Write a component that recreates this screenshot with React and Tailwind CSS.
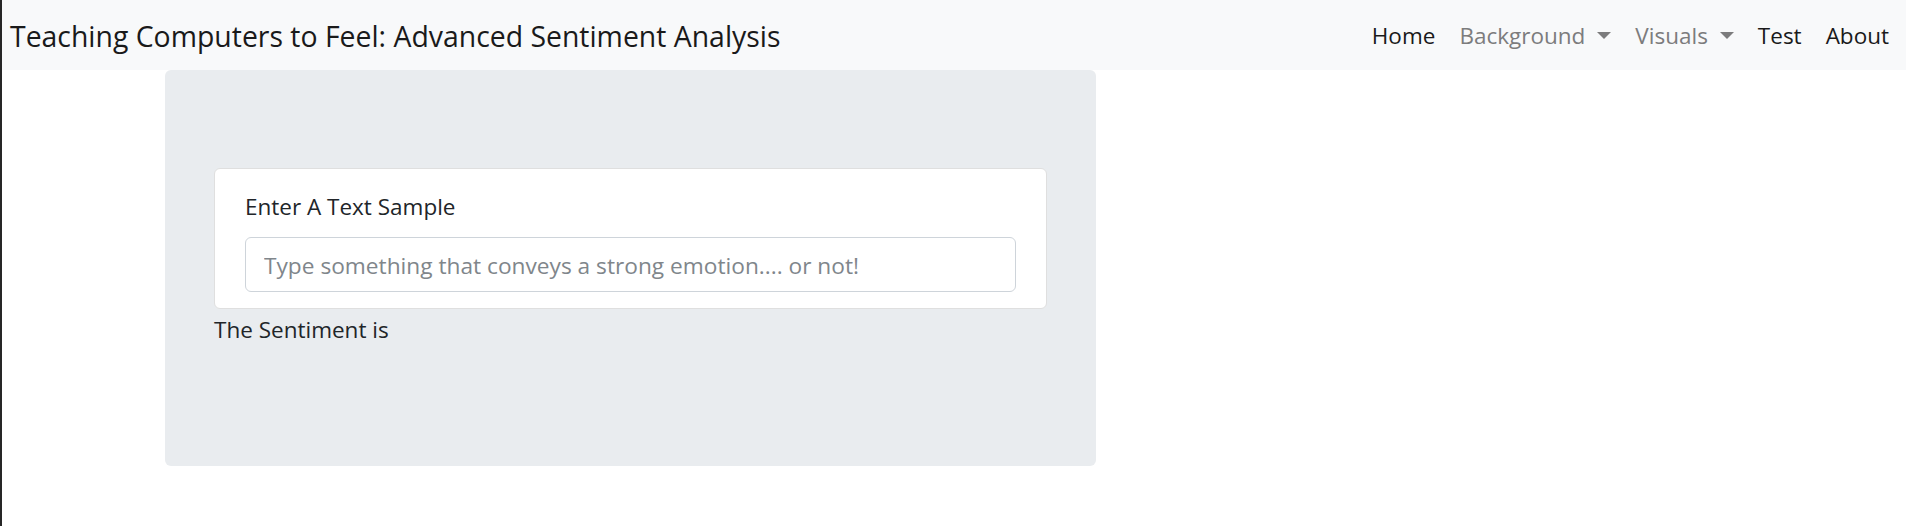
import React from "react";

function Caret() {
  return (
    <span className="ml-[12px] inline-block h-0 w-0 border-x-[7px] border-t-[7px] border-x-transparent border-t-[#7c7c7d] mb-[2px]" />
  );
}

export default function App() {
  return (
    <div
      className="min-h-screen flex bg-white text-[#212529]"
      style={{ fontFamily: '"Open Sans", "Noto Sans", sans-serif' }}
    >
      <div className="w-[2px] shrink-0 bg-[#262626]" />
      <div className="flex-1 min-w-0">
        <nav className="h-[70px] bg-[#f8f9fa] flex items-center justify-between pl-[8px] pr-[5px]">
          <a className="text-[28.4px] leading-[42px] text-[#1a1a1a] mt-[2px]">
            Teaching Computers to Feel: Advanced Sentiment Analysis
          </a>
          <ul className="flex items-center text-[22.5px] leading-[34px] mt-[2px]">
            <li className="px-[12px] text-[#1a1a1a]">Home</li>
            <li className="px-[12px] text-[#7c7c7d] flex items-center">
              Background
              <Caret />
            </li>
            <li className="px-[12px] text-[#7c7c7d] flex items-center">
              Visuals
              <Caret />
            </li>
            <li className="px-[12px] text-[#1a1a1a]">Test</li>
            <li className="px-[12px] text-[#1a1a1a]">About</li>
          </ul>
        </nav>
        <div className="pl-[163px]">
          <div className="w-[931px] h-[396px] bg-[#e9ecef] rounded-[6px] pt-[98px] px-[49px]">
            <div className="bg-white border border-[#dfdfdf] rounded-[6px] pt-[20px] pb-[16px] px-[30px]">
              <label className="block text-[22.5px] leading-[36px] mb-[12px]">
                Enter A Text Sample
              </label>
              <input
                type="text"
                placeholder="Type something that conveys a strong emotion.... or not!"
                className="block w-full h-[55px] border border-[#ced4da] rounded-[6px] px-[18px] pt-[2px] text-[22.7px] bg-white outline-none placeholder:text-[#80868b]"
              />
            </div>
            <p className="mt-[3px] text-[22.5px] leading-[36px]">The Sentiment is</p>
          </div>
        </div>
      </div>
    </div>
  );
}
